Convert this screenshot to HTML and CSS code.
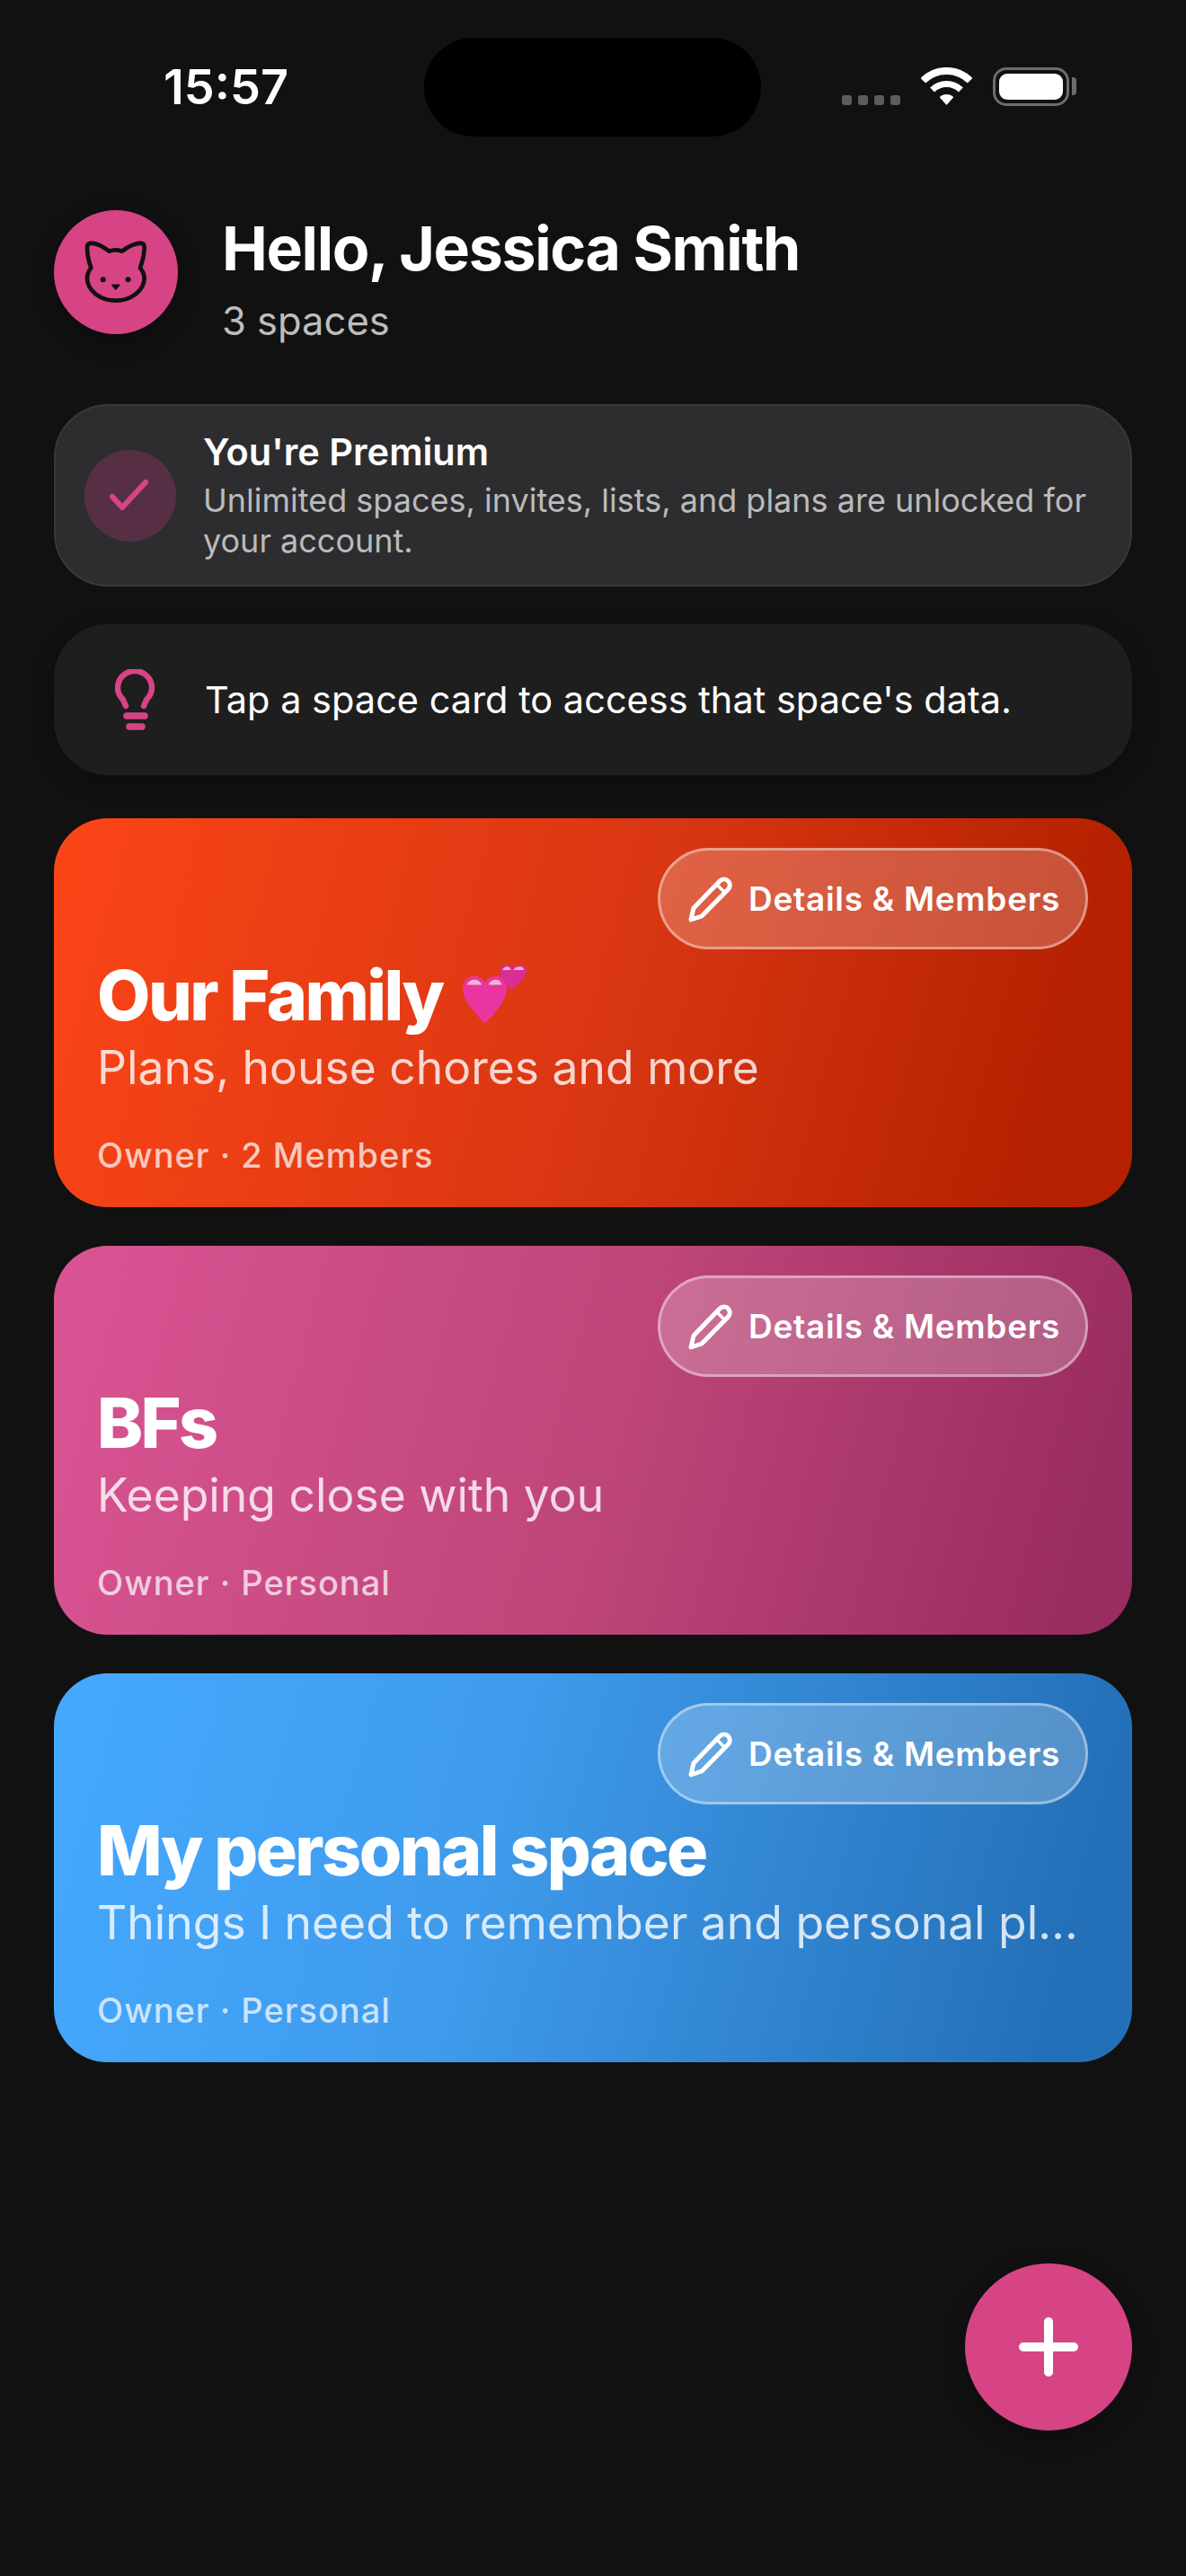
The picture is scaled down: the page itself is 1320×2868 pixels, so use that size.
FILE: index.html
```html
<!DOCTYPE html>
<html>
    <head>
        <title>Spaces</title>
        <link rel="stylesheet" href="styles.css">
    </head>
    <body>
        <div class="screen">
            <div class="status-bar">
                <div class="status-time">15:57</div>
                <div class="status-island"></div>
                <div class="status-icons">
                    <div class="signal-dots"><span></span><span></span><span></span><span></span></div>
                    <svg class="wifi" width="57" height="42" viewBox="0 0 57 42">
                        <path d="M2.3 14.8A37 37 0 0 1 54.7 14.8" fill="none" stroke="#fff" stroke-width="8"/>
                        <path d="M12.6 25.1A22.5 22.5 0 0 1 44.4 25.1" fill="none" stroke="#fff" stroke-width="7"/>
                        <path d="M28.5 42L20.7 33.2A11 11 0 0 1 36.3 33.2Z" fill="#fff"/>
                    </svg>
                    <div class="battery"><div class="battery-fill"></div></div>
                    <div class="battery-tip"></div>
                </div>
            </div>

            <div class="header">
                <div class="avatar">
                    <svg width="72" height="72" viewBox="160 170 215 215">
                        <path d="M245 208Q265 200 288 208C305 195 330 182 350 181Q362 182 362 195C362 220 355 245 348 263Q362 280 362 298C362 340 315 372 267 372C218 372 172 340 172 298Q172 280 185 263C178 245 172 220 172 195Q172 182 185 181C205 182 228 195 245 208Z" fill="none" stroke="#111" stroke-width="14" stroke-linejoin="round"/>
                        <circle cx="225" cy="302" r="9" fill="#111"/>
                        <circle cx="308" cy="302" r="9" fill="#111"/>
                        <path d="M255 320H279L267 334Z" fill="#111" stroke="#111" stroke-width="5" stroke-linejoin="round"/>
                    </svg>
                </div>
                <div class="header-text">
                    <div class="greeting">Hello, Jessica Smith</div>
                    <div class="space-count">3 spaces</div>
                </div>
            </div>

            <div class="premium-box">
                <div class="premium-icon">
                    <svg width="48" height="40" viewBox="0 0 48 40">
                        <path d="M4 21L15 33L41 5" fill="none" stroke="#d74486" stroke-width="6" stroke-linecap="round" stroke-linejoin="round"/>
                    </svg>
                </div>
                <div>
                    <div class="premium-title">You're Premium</div>
                    <div class="premium-text">Unlimited spaces, invites, lists, and plans are unlocked for your account.</div>
                </div>
            </div>

            <div class="tip-box">
                <svg class="tip-icon" width="44" height="68" viewBox="0 0 44 68">
                    <path d="M12 41L9 34C5 30 3 26 3 21A19 19 0 0 1 41 21C41 26 39 30 35 34L32 41" fill="none" stroke="#d74486" stroke-width="6.5" stroke-linecap="round" stroke-linejoin="round"/>
                    <path d="M13 52H33" stroke="#d74486" stroke-width="7.5" stroke-linecap="round"/>
                    <path d="M16 64H30" stroke="#d74486" stroke-width="7.5" stroke-linecap="round"/>
                </svg>
                <div class="tip-text">Tap a space card to access that space's data.</div>
            </div>

            <div class="space-list">
                <div class="space-card card-family">
                    <div class="details-btn">
                        <svg width="52" height="52" viewBox="0 0 52 52">
                            <path d="M4 49L7 36L36 6A6.4 6.4 0 0 1 45.5 15L16 45Z" fill="none" stroke="#fff" stroke-width="5" stroke-linejoin="round"/>
                            <path d="M33 10L42 19" stroke="#fff" stroke-width="3.5"/>
                        </svg>
                        <span>Details &amp; Members</span>
                    </div>
                    <div class="space-title">Our Family
                        <svg class="hearts" width="73" height="70" viewBox="0 0 76 70">
                            <path d="M27 69C17 58 1 44 1 28C1 19 7 14 14 14C20 14 25 17 27 22C29 17 34 14 40 14C47 14 52 20 52 28C52 44 37 58 27 69Z" fill="#e8359f"/>
                            <path d="M58 30C52 24 44 16 44 8C44 3 48 1 51 1C54 1 57 2 58 5C60 2 62 1 66 1C71 1 75 3 75 8C75 16 65 24 58 30Z" fill="#d92e94"/>
                            <path d="M6 24C7 20 11 18 15 18C19 18 22 21 23 24Z" fill="#eeb3d2"/>
                            <path d="M31 24C32 20 36 18 40 18C43 18 46 21 46 24Z" fill="#eeb3d2"/>
                            <path d="M47 7C48 4 51 3 53 3C55 3 56 5 57 7Z" fill="#eeb3d2"/>
                            <path d="M60 7C61 4 64 3 67 3C70 3 72 5 72 7Z" fill="#eeb3d2"/>
                        </svg>
                    </div>
                    <div class="space-desc">Plans, house chores and more</div>
                    <div class="space-meta">Owner · 2 Members</div>
                </div>

                <div class="space-card card-bfs">
                    <div class="details-btn">
                        <svg width="52" height="52" viewBox="0 0 52 52">
                            <path d="M4 49L7 36L36 6A6.4 6.4 0 0 1 45.5 15L16 45Z" fill="none" stroke="#fff" stroke-width="5" stroke-linejoin="round"/>
                            <path d="M33 10L42 19" stroke="#fff" stroke-width="3.5"/>
                        </svg>
                        <span>Details &amp; Members</span>
                    </div>
                    <div class="space-title">BFs</div>
                    <div class="space-desc">Keeping close with you</div>
                    <div class="space-meta">Owner · Personal</div>
                </div>

                <div class="space-card card-personal">
                    <div class="details-btn">
                        <svg width="52" height="52" viewBox="0 0 52 52">
                            <path d="M4 49L7 36L36 6A6.4 6.4 0 0 1 45.5 15L16 45Z" fill="none" stroke="#fff" stroke-width="5" stroke-linejoin="round"/>
                            <path d="M33 10L42 19" stroke="#fff" stroke-width="3.5"/>
                        </svg>
                        <span>Details &amp; Members</span>
                    </div>
                    <div class="space-title">My personal space</div>
                    <div class="space-desc">Things I need to remember and personal plans</div>
                    <div class="space-meta">Owner · Personal</div>
                </div>
            </div>

            <div class="fab">
                <svg width="66" height="66" viewBox="0 0 66 66">
                    <path d="M33 5V61M5 33H61" stroke="#fff" stroke-width="10" stroke-linecap="round"/>
                </svg>
            </div>
        </div>
    </body>
</html>
```

FILE: styles.css
```css
*{
    box-sizing: border-box;
}
body{
    margin: 0;
    background-color: #111111;
    font-family: Inter, "Liberation Sans", sans-serif;
    color: white;
}
.screen{
    position: relative;
    width: 1320px;
    height: 2868px;
    padding: 42px 60px 0 60px;
    overflow: hidden;
}

/* status bar */
.status-bar{
    display: flex;
    height: 110px;
    margin-left: -60px;
    margin-right: -60px;
}
.status-time{
    width: 472px;
    padding-left: 182px;
    padding-top: 24px;
    font-size: 54px;
    line-height: 62px;
    font-weight: 600;
}
.status-island{
    width: 375px;
    height: 110px;
    background-color: black;
    border-radius: 55px;
}
.status-icons{
    display: flex;
    align-items: flex-start;
    padding-left: 90px;
    padding-top: 33px;
}
.signal-dots{
    display: flex;
    gap: 7px;
    width: 88px;
    padding-top: 31px;
}
.signal-dots span{
    width: 11px;
    height: 11px;
    border-radius: 3px;
    background-color: #5c5c5c;
}
.battery{
    width: 85px;
    height: 43px;
    margin-left: 23px;
    padding: 4px;
    border: 3px solid #6d6d6d;
    border-radius: 15px;
}
.battery-fill{
    width: 100%;
    height: 100%;
    background-color: white;
    border-radius: 9px;
}
.battery-tip{
    width: 5px;
    height: 20px;
    margin-top: 11px;
    margin-left: 3px;
    background-color: #6d6d6d;
    border-radius: 0 4px 4px 0;
}

/* header */
.header{
    display: flex;
    gap: 49px;
    margin-top: 82px;
}
.avatar{
    display: flex;
    justify-content: center;
    align-items: center;
    width: 138px;
    height: 138px;
    background-color: #d74486;
    border-radius: 50%;
    box-shadow: 0 8px 24px rgba(0, 0, 0, 0.3);
}
.header-text{
    margin-top: 3px;
}
.greeting{
    font-size: 68px;
    line-height: 78px;
    font-weight: 700;
    letter-spacing: -1.35px;
}
.space-count{
    margin-top: 15px;
    font-size: 43.5px;
    line-height: 54px;
    color: #bdbdbd;
}

/* info boxes */
.premium-box{
    display: flex;
    align-items: center;
    gap: 30px;
    height: 203px;
    margin-top: 66px;
    padding: 0 32px;
    background-color: #2d2d30;
    border: 2px solid #38383b;
    border-radius: 60px;
}
.premium-icon{
    display: flex;
    justify-content: center;
    align-items: center;
    flex-shrink: 0;
    width: 102px;
    height: 102px;
    background-color: #562f45;
    border-radius: 50%;
}
.premium-title{
    font-size: 41.5px;
    line-height: 48px;
    font-weight: 600;
}
.premium-text{
    margin-top: 8px;
    font-size: 36px;
    line-height: 45px;
    color: #bbbbbb;
}
.tip-box{
    display: flex;
    align-items: center;
    gap: 56px;
    height: 168px;
    margin-top: 42px;
    padding: 0 68px;
    background-color: #1e1e1e;
    border-radius: 60px;
    box-shadow: 0 8px 24px rgba(0, 0, 0, 0.25);
}
.tip-text{
    font-size: 41.5px;
    line-height: 52px;
}

/* space cards */
.space-list{
    display: flex;
    flex-direction: column;
    gap: 43px;
    margin-top: 48px;
}
.space-card{
    display: flex;
    flex-direction: column;
    height: 433px;
    padding: 33px 49px 0 48px;
    border-radius: 60px;
}
.card-family{
    background: linear-gradient(105deg, #fb4517 0%, #d83612 53%, #b42000 92%);
}
.card-bfs{
    background: linear-gradient(105deg, #da5494 0%, #bd4578 53%, #992c60 95%);
}
.card-personal{
    background: linear-gradient(105deg, #45a9ff 0%, #3f9bec 40%, #2470b8 92%);
}
.details-btn{
    display: flex;
    align-items: center;
    gap: 16px;
    align-self: flex-end;
    width: 479px;
    height: 113px;
    padding-left: 30px;
    background-color: rgba(255, 255, 255, 0.22);
    border: 3px solid rgba(255, 255, 255, 0.4);
    border-radius: 57px;
    font-size: 37px;
    font-weight: 600;
    letter-spacing: 0.7px;
}
.space-title{
    display: flex;
    align-items: center;
    gap: 21px;
    height: 84px;
    margin-top: 9px;
    font-size: 77px;
    line-height: 84px;
    font-weight: 800;
    letter-spacing: -2.6px;
}
.hearts{
    margin-top: -2px;
}
.space-desc{
    margin-top: 6px;
    overflow: hidden;
    white-space: nowrap;
    text-overflow: ellipsis;
    font-size: 51.6px;
    line-height: 64px;
    font-weight: 370;
    color: rgba(255, 255, 255, 0.8);
}
.space-meta{
    margin-top: 43px;
    font-size: 38px;
    line-height: 46px;
    font-weight: 500;
    letter-spacing: 1px;
    color: rgba(255, 255, 255, 0.72);
}

/* add button */
.fab{
    position: absolute;
    right: 60px;
    bottom: 162px;
    display: flex;
    justify-content: center;
    align-items: center;
    width: 186px;
    height: 186px;
    background-color: #d74486;
    border-radius: 50%;
    box-shadow: 0 8px 24px rgba(0, 0, 0, 0.3);
}
```
